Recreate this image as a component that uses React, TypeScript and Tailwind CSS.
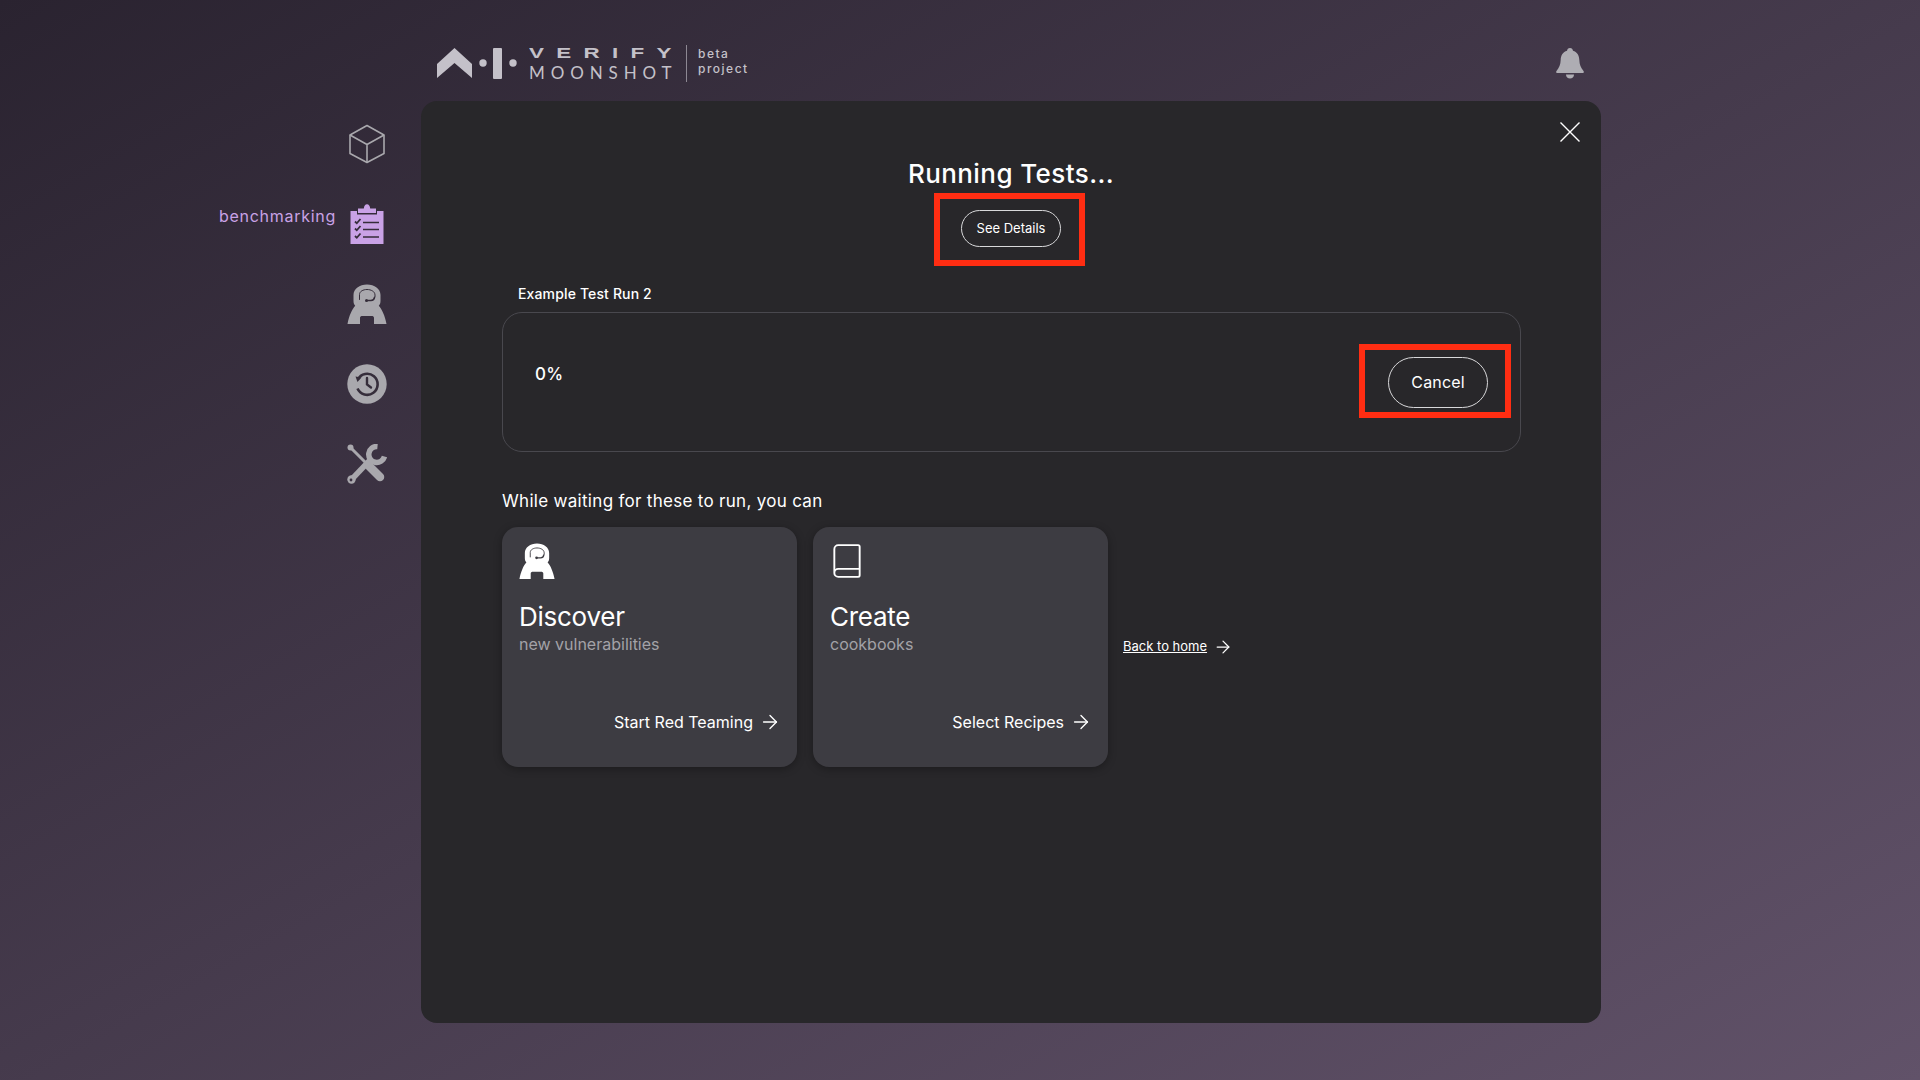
import { ArrowRight, Book } from "lucide-react";

function Cube() {
  return (
    <svg width="38" height="40" viewBox="0 0 38 40" fill="none" stroke="currentColor" strokeWidth="1.6" strokeLinejoin="round">
      <path d="M19 1.500 36 11v18.500L19 38.500 2 29.500V11Z" />
      <path d="M2 11l17 9.500L36 11M19 20.500v18" />
    </svg>
  );
}

function Clipboard() {
  return (
    <svg width="34" height="40" viewBox="0 0 34 40">
      <path fill="currentColor" d="M.5 7H7v3.500h20V7h6.500v33H.5Z" />
      <path fill="currentColor" d="M8 4.500h5.800C14 2 15.200.3 17 .3S20 2 20.200 4.500H26V9H8Z" />
      <g fill="none" stroke="#352d3a">
        <path strokeWidth="1.800" d="M5 17.500l1.800 1.800L10.500 15M5 24.500l1.800 1.800 3.700-4.300M5 32l1.800 1.800 3.700-4.300" />
        <path strokeWidth="1.400" d="M13 18.500h16M13 25.500h16M13 33h16" />
      </g>
    </svg>
  );
}

function Astronaut({ size, visor }: { size: number; visor: string }) {
  return (
    <svg width={size} height={size} viewBox="0 0 40 40">
      <path
        fill="currentColor"
        d="M20 .5c7.500 0 13.500 4.500 13.500 10.500v6c0 2-.6 3.500-1.700 4.700C35 25 38 32 39.500 40H27v-6c0-1.400-1-2-2.500-2h-9c-1.500 0-2.500.6-2.500 2v6H.5C2 32 5 25 8.200 21.700 7.100 20.500 6.500 19 6.500 17v-6C6.500 5 12.500.5 20 .5Z"
      />
      <path
        fill="none"
        stroke={visor}
        strokeWidth="1"
        strokeLinecap="round"
        d="M12.500 15.500v-5C12.500 7.500 16 5.500 20 5.500s8 2 8 5.500v1.500"
      />
      <path fill="none" stroke={visor} strokeWidth="1.500" strokeLinecap="round" d="M20 16.500h4c2 0 3.300-1.300 3.600-3.300" />
      <circle cx="19.500" cy="16.500" r="1.500" fill={visor} />
    </svg>
  );
}

function History() {
  return (
    <svg width="40" height="40" viewBox="0 0 40 40">
      <circle cx="20" cy="20" r="19.700" fill="currentColor" />
      <path fill="none" stroke="#352d3a" strokeWidth="2.600" d="M10.800 15.500A10.500 10.500 0 1 1 10.500 24.500" />
      <path fill="#352d3a" d="M8.500 12.500l6 1-4 4.500Z" />
      <path fill="none" stroke="#352d3a" strokeWidth="2.400" strokeLinecap="round" d="M20 14v6.500l4 3" />
    </svg>
  );
}

function Tools() {
  return (
    <svg width="40" height="40" viewBox="0 0 40 40" fill="none" stroke="currentColor" strokeLinecap="round">
      <path strokeWidth="3" d="M4 4 20 20" />
      <circle cx="3.500" cy="3.500" r="3" fill="currentColor" stroke="none" />
      <path strokeWidth="8.500" strokeLinecap="round" d="M22.500 22.500 33 33" />
      <path strokeWidth="5.500" strokeLinecap="butt" d="M5 35 25 14" />
      <circle cx="4.500" cy="35.500" r="4.200" fill="currentColor" stroke="none" />
      <circle cx="4" cy="36" r="1.400" fill="#3a3040" stroke="none" />
      <path strokeWidth="5.500" strokeLinecap="butt" d="M37.500 12.500A8 8 0 1 1 30.500 2.500" />
    </svg>
  );
}

function Bell() {
  return (
    <svg width="28" height="31" viewBox="0 0 28 31" fill="currentColor">
      <path d="M14 0c1.800 0 2.800 1.200 3 2.800 4 1.300 6.200 4.600 6.300 9 .2 5 1.500 8 4.200 11.200.7.900.3 2-1 2H1.500c-1.300 0-1.700-1.100-1-2C3.200 19.800 4.500 16.800 4.700 11.800c.1-4.400 2.300-7.700 6.300-9C11.200 1.200 12.200 0 14 0Z" />
      <path d="M10 26.500h8c0 2.500-1.800 4-4 4s-4-1.500-4-4Z" />
    </svg>
  );
}

function Close() {
  return (
    <svg width="20" height="20" viewBox="0 0 20 20" stroke="currentColor" strokeWidth="1.400" fill="none">
      <path d="M.5.500l19 19M19.500.500l-19 19" />
    </svg>
  );
}

function Logo() {
  return (
    <div className="flex items-center text-[#c4c1c9]">
      <svg width="85" height="31" viewBox="0 0 85 31" fill="currentColor" className="shrink-0">
        <path d="M17.500 0 35 16v14L17.500 15 0 30V16Z" />
        <circle cx="46" cy="15" r="3.700" />
        <rect x="56" y="0" width="9" height="31" rx="1" />
        <circle cx="76" cy="15" r="3.700" />
      </svg>
      <div className="ml-[7px] w-[150px] flex flex-col font-['Liberation_Sans',sans-serif] leading-none whitespace-nowrap">
        <span className="text-[14px] font-bold tracking-[7.7px] leading-[18px] h-[18px] scale-x-[1.6] origin-left">VERIFY</span>
        <span className="text-[17px] font-['Lato',sans-serif] font-normal tracking-[5.9px] leading-[21px] h-[20px]">MOONSHOT</span>
      </div>
      <div className="ml-[7px] w-px h-[37px] bg-[#8d8893]" />
      <div className="ml-[11px] -mt-[5px] flex flex-col text-[12px] font-medium tracking-[1.5px] leading-[15px]">
        <span>beta</span>
        <span>project</span>
      </div>
    </div>
  );
}

function Card({ icon, title, sub, action }: { icon: React.ReactNode; title: string; sub: string; action: string }) {
  return (
    <div className="w-[295px] h-[240px] rounded-[16px] bg-[#3d3c42] shadow-[0_2px_8px_rgba(0,0,0,0.3)] flex flex-col pl-[17px] pr-[16px] pt-4 pb-[33px]">
      <div className="h-9 flex items-center">{icon}</div>
      <div className="mt-[22px] text-[26px] leading-8 tracking-[-0.01em] text-white">{title}</div>
      <div className="-mt-px text-[16px] leading-6 text-[#a3a2a7]">{sub}</div>
      <div className="mt-auto flex items-center justify-end gap-[6px] text-[16px] leading-6 text-white">
        <span>{action}</span>
        <ArrowRight size={22} strokeWidth={1.500} />
      </div>
    </div>
  );
}

const Highlight = ({ className }: { className: string }) => (
  <div className={"absolute border-[6px] border-[#ff2d12] " + className} />
);

export default function App() {
  return (
    <div className="flex w-full h-screen overflow-hidden font-['Inter',sans-serif] text-white bg-[linear-gradient(to_bottom_right,#2a2330,#615269)]">
      <nav className="w-[421px] shrink-0 flex flex-col items-end gap-10 pt-[124px] pr-[34px] text-[#a9a8ad]">
        <div className="w-10 h-10 flex justify-center items-center"><Cube /></div>
        <div className="flex items-start gap-[11px]">
          <span className="text-[16px] leading-6 tracking-[0.045em] text-[#c9a2e6]">benchmarking</span>
          <div className="w-10 h-10 flex justify-center items-center text-[#c9a2e6]"><Clipboard /></div>
        </div>
        <div className="w-10 h-10"><Astronaut size={40} visor="#352d3a" /></div>
        <div className="w-10 h-10"><History /></div>
        <div className="w-10 h-10"><Tools /></div>
      </nav>
      <div className="w-[1180px] shrink-0 flex flex-col">
        <header className="h-[101px] shrink-0 flex items-start justify-between pt-[44px] pl-4 pr-[17px]">
          <Logo />
          <div className="text-[#aeadb3] mt-[4px]"><Bell /></div>
        </header>
        <main className="relative h-[922px] rounded-[16px] bg-[#28272a] flex flex-col px-[81px] pt-[57px]">
          <button className="absolute top-[21px] right-[21px] text-white"><Close /></button>
          <h1 className="text-center text-[26px] leading-8 font-medium tracking-[0.016em]">Running Tests...</h1>
          <div className="mt-[20px] flex justify-center relative">
            <button className="w-[100px] h-[37px] rounded-full border border-[#d8d8da] text-[13px]">See Details</button>
            <Highlight className="w-[151px] h-[73px] -top-[17px] left-[432px]" />
          </div>
          <div className="mt-[37px] pl-4 text-[14px] leading-5 font-medium tracking-[0.01em]">Example Test Run 2</div>
          <div className="mt-2 -mr-px relative h-[140px] rounded-[20px] border border-[#49484e] flex items-start justify-between pl-8 pr-8 pt-[49px]">
            <span className="text-[17px] leading-6 font-medium tracking-[0.02em]">0%</span>
            <button className="-mt-[5px] w-[100px] h-[51px] pb-px rounded-full border border-[#d8d8da] text-[16px] tracking-[0.01em]">Cancel</button>
            <Highlight className="w-[152px] h-[74px] top-[31px] right-[9px]" />
          </div>
          <div className="mt-[37px] text-[17px] leading-6 tracking-[0.3px]">While waiting for these to run, you can</div>
          <div className="mt-[14px] flex items-center gap-4">
            <Card icon={<Astronaut size={36} visor="#3d3c42" />} title="Discover" sub="new vulnerabilities" action="Start Red Teaming" />
            <Card icon={<Book size={38} strokeWidth={1.200} className="-ml-[2px]" />} title="Create" sub="cookbooks" action="Select Recipes" />
            <div className="-ml-px flex items-center gap-[6px] text-[13px]">
              <span className="underline">Back to home</span>
              <ArrowRight size={20} strokeWidth={1.500} />
            </div>
          </div>
        </main>
      </div>
    </div>
  );
}
